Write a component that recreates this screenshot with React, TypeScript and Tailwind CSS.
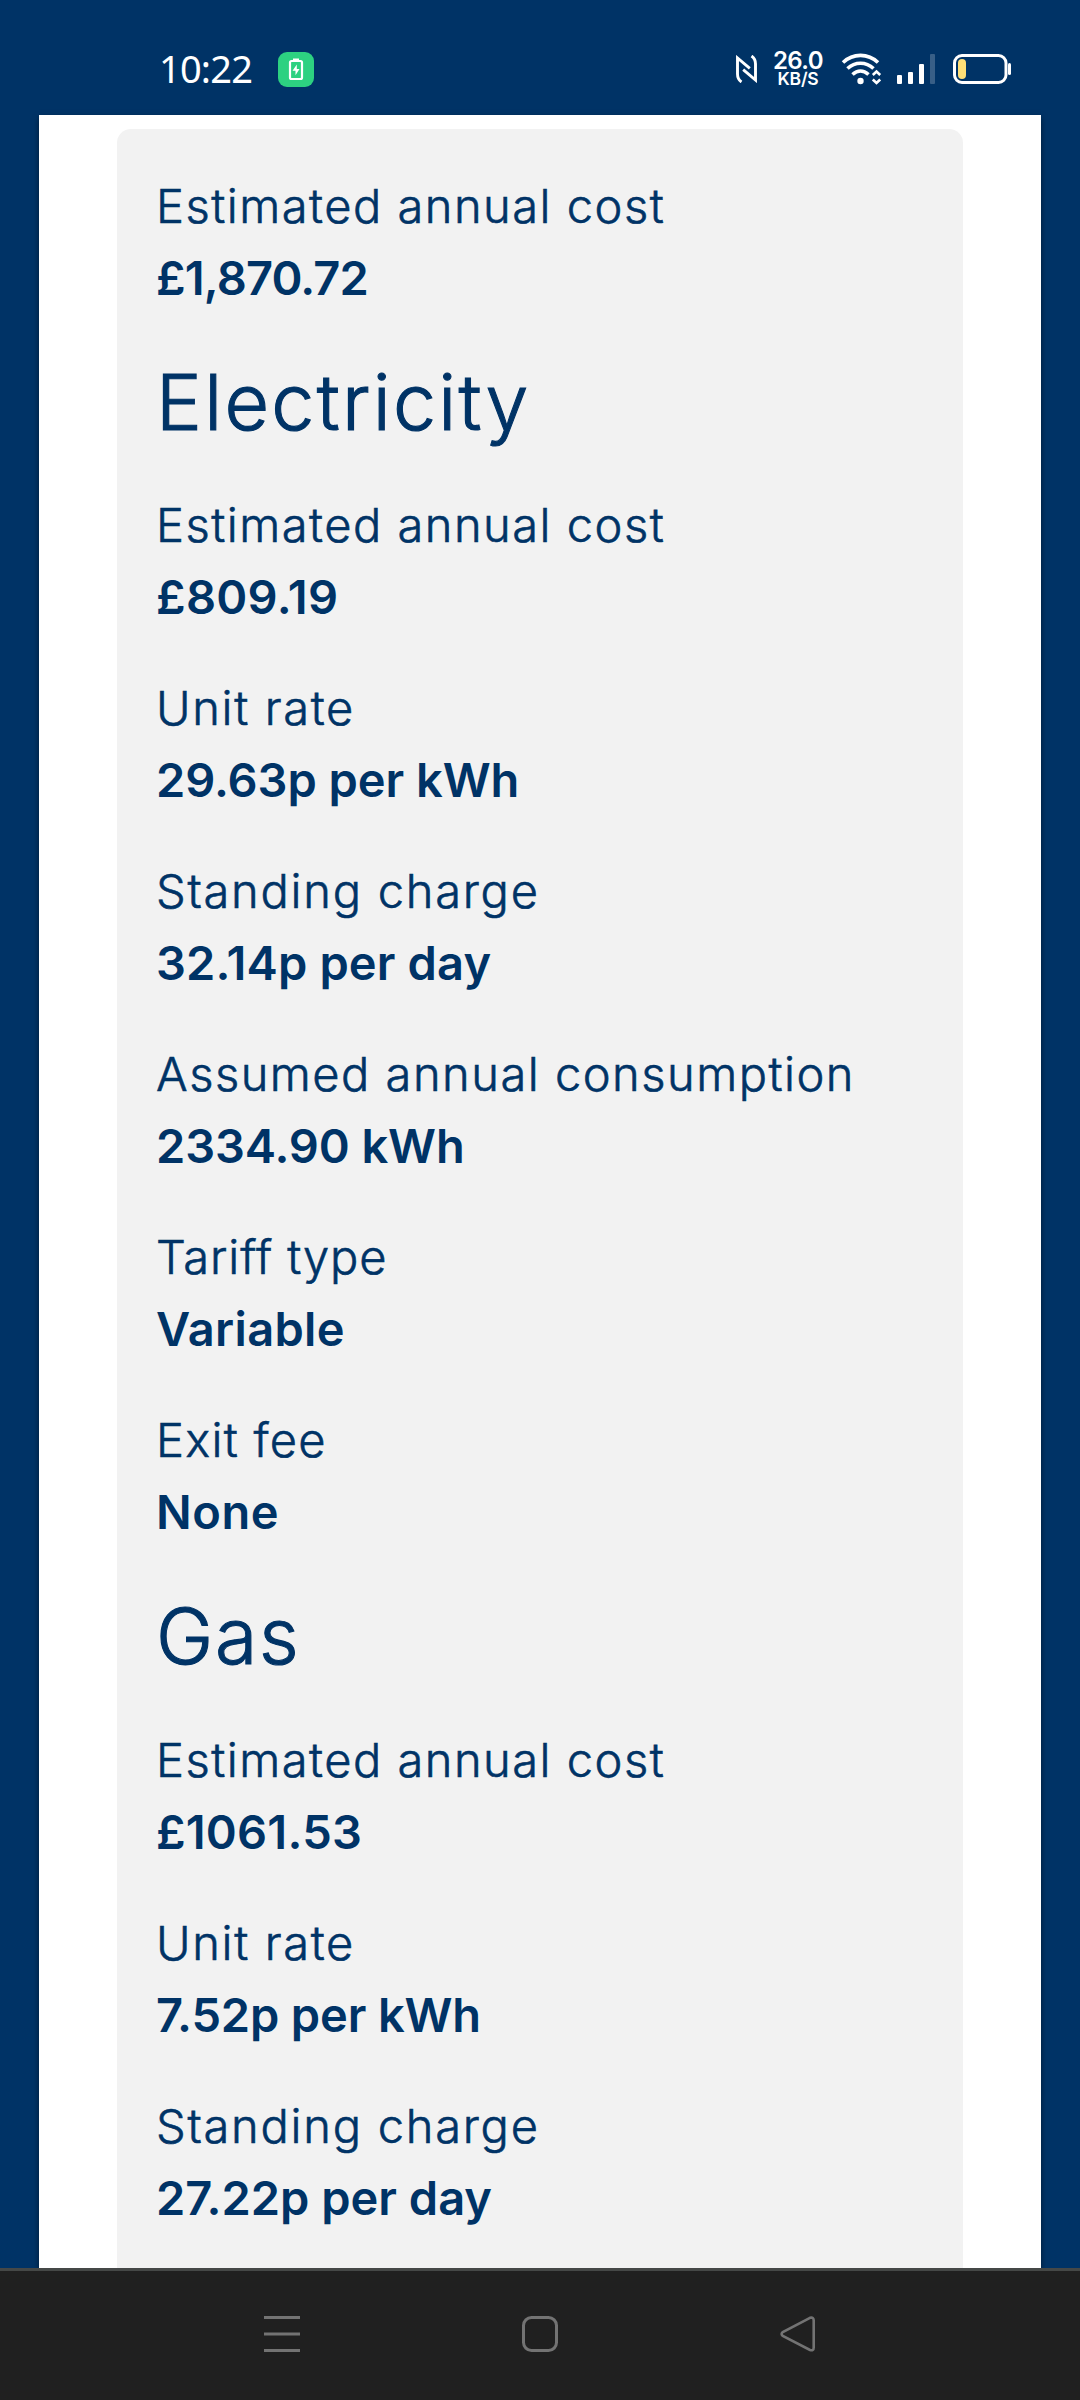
import { clsx } from 'clsx';

/* ------------------------------------------------------------------ */
/*  Data                                                               */
/* ------------------------------------------------------------------ */

interface TariffRow {
  label: string;
  labelClass: string;
  value: string;
  valueClass: string;
}

const SUMMARY: TariffRow[] = [
  { label: 'Estimated annual cost', labelClass: 'tracking-[1.5px]', value: '£1,870.72', valueClass: 'tracking-[-0.85px]' },
];

const ELECTRICITY: TariffRow[] = [
  { label: 'Estimated annual cost', labelClass: 'tracking-[1.5px]', value: '£809.19', valueClass: 'tracking-[0.3px]' },
  { label: 'Unit rate', labelClass: 'tracking-[1.65px]', value: '29.63p per kWh', valueClass: 'tracking-[-0.05px]' },
  { label: 'Standing charge', labelClass: 'tracking-[1.75px]', value: '32.14p per day', valueClass: 'tracking-[0.15px]' },
  { label: 'Assumed annual consumption', labelClass: 'tracking-[1.5px]', value: '2334.90 kWh', valueClass: 'tracking-[-0.1px]' },
  { label: 'Tariff type', labelClass: 'tracking-[0.9px]', value: 'Variable', valueClass: 'tracking-[0.3px]' },
  { label: 'Exit fee', labelClass: 'tracking-[1.25px]', value: 'None', valueClass: 'tracking-[0.6px]' },
];

const GAS: TariffRow[] = [
  { label: 'Estimated annual cost', labelClass: 'tracking-[1.5px]', value: '£1061.53', valueClass: 'tracking-[0.2px]' },
  { label: 'Unit rate', labelClass: 'tracking-[1.65px]', value: '7.52p per kWh', valueClass: 'tracking-[-0.15px]' },
  { label: 'Standing charge', labelClass: 'tracking-[1.75px]', value: '27.22p per day', valueClass: '' },
];

/* ------------------------------------------------------------------ */
/*  Status bar                                                         */
/* ------------------------------------------------------------------ */

function StatusBar() {
  return (
    <header className="flex h-[115px] items-start pl-[159px] pt-[50px] text-white">
      <span className="w-[119px] font-['Noto_Sans',sans-serif] text-[38px] leading-[36px] tracking-[-0.8px]">10:22</span>
      <svg className="mt-0.5" width="36" height="35" viewBox="0 0 36 35">
        <rect width="36" height="35" rx="9" fill="#2dd181" />
        <path d="M15 6.500h6v2.500h-6z" fill="#fff" />
        <rect x="12" y="9" width="12" height="18" rx="1.500" fill="none" stroke="#fff" strokeWidth="2.200" />
        <path d="M18.800 12.500l-4.300 6.200h3v4.500l4-6.200h-2.700z" fill="#fff" />
      </svg>
      <svg className="ml-[422px] mt-[5px]" width="22" height="28" viewBox="0 0 22 28" fill="none" stroke="#fff" strokeWidth="2.900">
        <path d="M5.500 27C2.500 25 1.500 22.500 1.500 19V3l12.300 10.300" />
        <path d="M15.500 1C18.500 3 19.500 5.500 19.500 9v16L7.200 14.700" />
      </svg>
      <div className="ml-[14px] mt-px flex w-[52px] flex-col items-center font-semibold">
        <span className="text-[24px] leading-[19px] tracking-[-0.6px]">26.0</span>
        <span className="text-[17.500px] leading-[18px] tracking-[-0.2px]">KB/S</span>
      </div>
      <svg className="ml-[17px] mt-0.5" width="42" height="34" viewBox="0 0 42 34" fill="none" stroke="#fff" strokeWidth="3.600">
        <path d="M2 10.500C12 1 27 1 37 10.500" />
        <path d="M6.500 16.500c7.500-7 18.500-7 26 0" />
        <path d="M11.500 22.500c5-4.500 11-4.500 16 0" />
        <circle cx="19.500" cy="29" r="3.200" fill="#fff" stroke="none" />
        <path d="M31.800 23l3.700-3.500 3.700 3.500M31.800 27.500l3.700 3.500 3.700-3.500" strokeWidth="2.600" />
      </svg>
      <svg className="ml-[14px] mt-[3px]" width="39" height="32" viewBox="0 0 39 32" fill="#fff">
        <rect x="0" y="22" width="5" height="9" rx="1" />
        <rect x="11" y="19" width="5" height="12" rx="1" />
        <rect x="22" y="11" width="5" height="20" rx="1" />
        <rect x="33" y="1" width="5" height="30" rx="1" opacity=".22" />
      </svg>
      <svg className="ml-[17px] mt-[3px]" width="60" height="32" viewBox="0 0 60 32">
        <rect x="1.500" y="2.500" width="51.500" height="27" rx="7.500" fill="none" stroke="#fff" strokeWidth="3" />
        <rect x="5" y="6" width="8" height="20" rx="4" fill="#ffdf77" />
        <path d="M56.500 11.500v9" stroke="#fff" strokeWidth="3" strokeLinecap="round" />
      </svg>
    </header>
  );
}

/* ------------------------------------------------------------------ */
/*  Tariff card                                                        */
/* ------------------------------------------------------------------ */

function TariffList({ rows }: { rows: TariffRow[] }) {
  return (
    <dl className="flex flex-col gap-[39px] text-[47px] leading-[72px] whitespace-nowrap">
      {rows.map((row) => (
        <div key={row.label}>
          {/* thin outline puts the label between light and regular */}
          <dt className={clsx('font-light [-webkit-text-stroke:0.6px_#003366]', row.labelClass)}>{row.label}</dt>
          <dd className={clsx('font-semibold', row.valueClass)}>{row.value}</dd>
        </div>
      ))}
    </dl>
  );
}

function SectionTitle({ children, className }: { children: string; className: string }) {
  return (
    <h2
      className={clsx(
        'mt-10 mb-[38.350px] text-[77px] font-light leading-[97px] [-webkit-text-stroke:1.1px_#003366]',
        className,
      )}
    >
      {children}
    </h2>
  );
}

/* ------------------------------------------------------------------ */
/*  System navigation                                                  */
/* ------------------------------------------------------------------ */

function NavigationBar() {
  return (
    <nav className="flex h-[132px] shrink-0 items-start justify-between border-t-[3px] border-[#454847] bg-[#202020] pl-[264px] pr-[264px] pt-[45px]">
      <svg width="36" height="36" viewBox="0 0 36 36" fill="#737373">
        <path d="M0 0h36v3H0zM0 16.500h36v3H0zM0 33h36v3H0z" />
      </svg>
      <svg width="36" height="36" viewBox="0 0 36 36" fill="none" stroke="#737373" strokeWidth="3">
        <rect x="1.500" y="1.500" width="33" height="33" rx="8" />
      </svg>
      <svg width="36" height="36" viewBox="0 0 36 36" fill="none" stroke="#737373" strokeWidth="2.600">
        <path d="M30 1.800L2.800 16Q.4 18 2.800 20L30 34Q33.700 35.200 33.700 31.500V4.500Q33.700.8 30 1.800z" />
      </svg>
    </nav>
  );
}

export default function App() {
  return (
    <div className="flex h-[2400px] w-[1080px] flex-col overflow-hidden bg-[#003366] font-['Inter',sans-serif] text-[#003366]">
      <StatusBar />
      <main className="mx-[39px] h-[2153px] overflow-hidden bg-white px-[78px] pt-[14px] shadow-[0_3px_6px_rgba(0,0,0,0.5)]">
        <section className="h-[2300px] rounded-t-[14px] bg-[#f2f2f2] px-[39px] pt-[41px]">
          <TariffList rows={SUMMARY} />
          <SectionTitle className="tracking-[2.300px]">Electricity</SectionTitle>
          <TariffList rows={ELECTRICITY} />
          <SectionTitle className="tracking-[1.700px]">Gas</SectionTitle>
          <TariffList rows={GAS} />
        </section>
      </main>
      <NavigationBar />
    </div>
  );
}
